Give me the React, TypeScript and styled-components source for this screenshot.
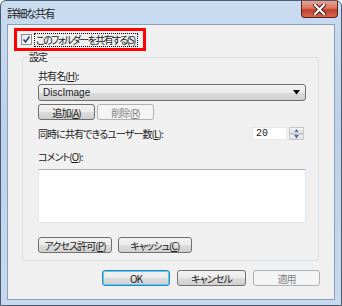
import React from "react";
import styled, { createGlobalStyle, css } from "styled-components";

const GlobalStyle = createGlobalStyle`
  html, body {
    margin: 0;
    padding: 0;
    background: #ffffff;
  }
  body {
    font-family: "Noto Sans CJK JP", "Liberation Sans", sans-serif;
    font-size: 10px;
    letter-spacing: -0.9px;
    font-feature-settings: "palt";
    color: #1a1a1a;
  }
  u {
    text-underline-offset: 1px;
  }
`;

const Window = styled.div`
  width: 342px;
  height: 306px;
  box-sizing: border-box;
  display: flex;
  flex-direction: column;
  border: 1px solid #4b5b70;
  border-radius: 6px 6px 0 0;
  background: linear-gradient(180deg, #c9dcf0 0%, #bcd2ea 40%, #c6d9ee 100%);
  padding: 0 6px 5px 6px;
`;

const TitleBar = styled.div`
  height: 23px;
  display: flex;
  justify-content: space-between;
  align-items: flex-start;
`;

const Title = styled.span`
  margin-top: 5px;
  font-size: 11px;
  letter-spacing: -1.6px;
  line-height: 14px;
  color: #1e1e1e;
`;

const CloseButton = styled.div`
  width: 37px;
  height: 17px;
  margin-right: -3px;
  box-sizing: border-box;
  border: 1px solid #5a1f1a;
  border-top: none;
  border-radius: 0 0 4px 4px;
  background: linear-gradient(180deg, #e8a493 0%, #d9735f 45%, #c1402a 55%, #d4674f 100%);
  display: flex;
  align-items: center;
  justify-content: center;
`;

const Client = styled.div`
  flex: 1;
  display: flex;
  flex-direction: column;
  background: #f0f0f0;
  border: 1px solid #8c9fb7;
  padding: 3px 14px 0 6px;
`;

const Highlight = styled.div`
  width: 132px;
  height: 23px;
  box-sizing: border-box;
  border: 3px solid #ff0000;
  display: flex;
  align-items: center;
  padding-left: 4px;
  gap: 2px;
`;

const Check = styled.span`
  width: 11px;
  height: 11px;
  flex-shrink: 0;
  box-sizing: border-box;
  border: 1px solid #8f8f8f;
  background: linear-gradient(135deg, #e9e9e9, #ffffff);
  display: flex;
  align-items: center;
  justify-content: center;
`;

const CheckLabel = styled.span`
  line-height: 12px;
  letter-spacing: -1.6px;
  border: 1px dotted #000;
  padding: 0 2px 0 1px;
  white-space: nowrap;
`;

const Group = styled.fieldset`
  margin: 0 0 0 8px;
  width: 297px;
  height: 210px;
  box-sizing: border-box;
  border: 1px solid #d5dfe5;
  border-radius: 3px;
  padding: 1px 12px 0 15px;
  display: flex;
  flex-direction: column;
`;

const Legend = styled.legend`
  padding: 0 1px;
  margin-left: -10px;
  line-height: 12px;
`;

const Label = styled.div<{ $top?: number }>`
  line-height: 13px;
  margin-top: ${(p) => p.$top ?? 0}px;
`;

const Combo = styled.div`
  margin-top: 2px;
  height: 17px;
  box-sizing: border-box;
  border: 1px solid #707070;
  border-radius: 3px;
  background: linear-gradient(180deg, #f2f2f2 0%, #ebebeb 50%, #dddddd 51%, #cfcfcf 100%);
  display: flex;
  align-items: center;
  justify-content: space-between;
  padding: 0 5px 0 4px;
  font-family: "Liberation Sans", sans-serif;
  font-size: 10px;
  letter-spacing: 0;
`;

const ButtonRow = styled.div<{ $top: number; $gap: number; $end?: boolean }>`
  display: flex;
  gap: ${(p) => p.$gap}px;
  margin-top: ${(p) => p.$top}px;
  justify-content: ${(p) => (p.$end ? "flex-end" : "flex-start")};
`;

const Button = styled.div<{ $w: number; $disabled?: boolean; $default?: boolean }>`
  width: ${(p) => p.$w}px;
  height: 16px;
  box-sizing: border-box;
  border: 1px solid #707070;
  border-radius: 3px;
  background: linear-gradient(180deg, #f2f2f2 0%, #ebebeb 50%, #dddddd 51%, #cfcfcf 100%);
  display: flex;
  align-items: center;
  justify-content: center;
  line-height: 13px;
  white-space: nowrap;
  ${(p) =>
    p.$default &&
    css`
      border-color: #3c7fb1;
      box-shadow: inset 0 0 0 1px #48d4f8;
    `}
  ${(p) =>
    p.$disabled &&
    css`
      border-color: #adb2b5;
      background: #f4f4f4;
      color: #838383;
    `}
`;

const SpinRow = styled.div`
  margin-top: 7px;
  display: flex;
  justify-content: space-between;
  align-items: center;
  height: 13px;
`;

const Spin = styled.div`
  display: flex;
  gap: 2px;
  margin-right: 2px;
`;

const SpinInput = styled.div`
  width: 35px;
  height: 13px;
  box-sizing: border-box;
  background: #ffffff;
  border: 1px solid #e3e9ef;
  font-family: "Liberation Mono", monospace;
  font-size: 10px;
  letter-spacing: 0;
  line-height: 11px;
  padding-left: 3px;
`;

const SpinButtons = styled.div`
  width: 15px;
  height: 13px;
  display: flex;
  flex-direction: column;
`;

const SpinArrow = styled.div`
  flex: 1;
  box-sizing: border-box;
  border: 1px solid #c3c8cf;
  background: linear-gradient(180deg, #f5f5f5, #dedede);
  display: flex;
  align-items: center;
  justify-content: center;
`;

const Comment = styled.div`
  margin-top: 6px;
  height: 54px;
  box-sizing: border-box;
  background: #ffffff;
  border: 1px solid #e2e7ec;
  border-top-color: #abadb3;
`;

const Arrow: React.FC<{ up?: boolean; color: string; w: number }> = ({ up, color, w }) => (
  <svg width={w} height={w / 2 + 1} viewBox={`0 0 ${w} ${w / 2 + 1}`}>
    <polygon
      points={up ? `0,${w / 2 + 1} ${w},${w / 2 + 1} ${w / 2},0` : `0,0 ${w},0 ${w / 2},${w / 2 + 1}`}
      fill={color}
    />
  </svg>
);

export default function App() {
  return (
    <>
      <GlobalStyle />
      <Window>
        <TitleBar>
          <Title>詳細な共有</Title>
          <CloseButton>
            <svg width="13" height="11" viewBox="0 0 13 11">
              <path d="M2 1 L11 10 M11 1 L2 10" stroke="#3a1410" strokeWidth="4" strokeLinecap="square" />
              <path d="M2 1 L11 10 M11 1 L2 10" stroke="#ffffff" strokeWidth="2.2" strokeLinecap="square" />
            </svg>
          </CloseButton>
        </TitleBar>
        <Client>
          <Highlight>
            <Check>
              <svg width="9" height="9" viewBox="0 0 9 9">
                <path d="M1.5 4.5 L3.5 7 L7.5 1.5" stroke="#2b3f8a" strokeWidth="1.6" fill="none" />
              </svg>
            </Check>
            <CheckLabel>このフォルダーを共有する(S)</CheckLabel>
          </Highlight>
          <Group>
            <Legend>設定</Legend>
            <Label $top={5}>共有名(<u>H</u>):</Label>
            <Combo>
              <span>DiscImage</span>
              <Arrow color="#000000" w={7} />
            </Combo>
            <ButtonRow $top={3} $gap={2}>
              <Button $w={57}>追加(<u>A</u>)</Button>
              <Button $w={57} $disabled>
                削除(<u>R</u>)
              </Button>
            </ButtonRow>
            <SpinRow>
              <span>
                同時に共有できるユーザー数(<u>L</u>):
              </span>
              <Spin>
                <SpinInput>20</SpinInput>
                <SpinButtons>
                  <SpinArrow>
                    <Arrow up color="#4a6fa5" w={5} />
                  </SpinArrow>
                  <SpinArrow>
                    <Arrow color="#4a6fa5" w={5} />
                  </SpinArrow>
                </SpinButtons>
              </Spin>
            </SpinRow>
            <Label $top={10}>
              コメント(<u>O</u>):
            </Label>
            <Comment />
            <ButtonRow $top={14} $gap={6}>
              <Button $w={74}>
                アクセス許可(<u>P</u>)
              </Button>
              <Button $w={74}>
                キャッシュ(<u>C</u>)
              </Button>
            </ButtonRow>
          </Group>
          <ButtonRow $top={9} $gap={7} $end>
            <Button $w={68} $default>
              OK
            </Button>
            <Button $w={69}>キャンセル</Button>
            <Button $w={67} $disabled>
              適用
            </Button>
          </ButtonRow>
        </Client>
      </Window>
    </>
  );
}
